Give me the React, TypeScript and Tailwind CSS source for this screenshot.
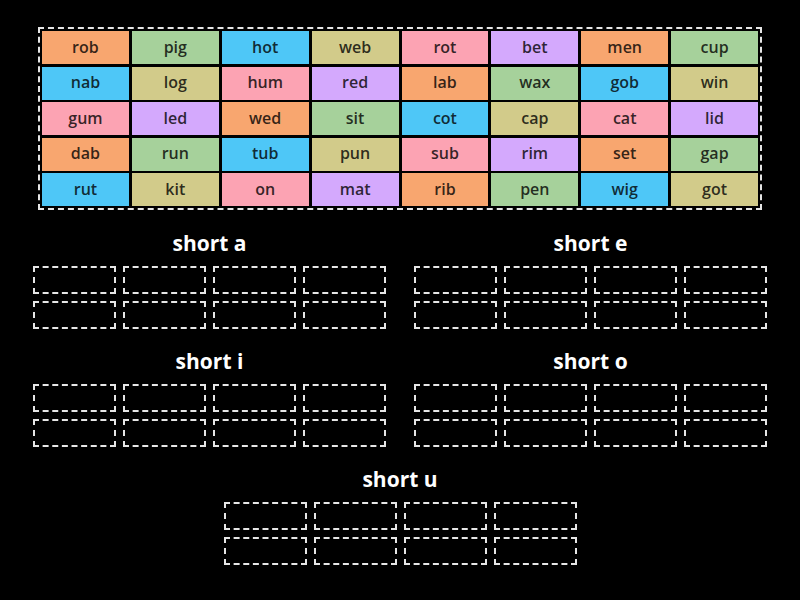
const words = [
  "rob", "pig", "hot", "web", "rot", "bet", "men", "cup",
  "nab", "log", "hum", "red", "lab", "wax", "gob", "win",
  "gum", "led", "wed", "sit", "cot", "cap", "cat", "lid",
  "dab", "run", "tub", "pun", "sub", "rim", "set", "gap",
  "rut", "kit", "on", "mat", "rib", "pen", "wig", "got",
];

// colours repeat in this order across the whole word bank
const tileColors = [
  "bg-[#f8a66f]",
  "bg-[#a6d19b]",
  "bg-[#4ec7f7]",
  "bg-[#d2cb8a]",
  "bg-[#fca3b3]",
  "bg-[#d4a9fd]",
];

function DropGroup({ title }: { title: string }) {
  return (
    <div className="w-[353px] flex flex-col">
      <h2 className="h-[24px] leading-[24px] text-center text-[21px] font-bold text-white mb-[11px]">
        {title}
      </h2>
      <div className="grid grid-cols-4 gap-[7px]">
        {Array.from({ length: 8 }).map((_, i) => (
          <div key={i} className="h-[28px] border-2 border-dashed border-[#e6e6e6]" />
        ))}
      </div>
    </div>
  );
}

export default function App() {
  return (
    <div
      className="w-[800px] h-[600px] bg-black overflow-hidden pt-[27px]"
      style={{ fontFamily: '"Open Sans", "Noto Sans", sans-serif' }}
    >
      <div className="w-[724px] mx-auto border-2 border-dashed border-[#e6e6e6] p-[2px]">
        <div className="grid grid-cols-8 gap-x-[3px] gap-y-[2.5px]">
          {words.map((w, i) => (
            <div
              key={w}
              className={`${tileColors[i % 6]} h-[33px] pb-[2px] flex items-center justify-center text-[16px] font-semibold text-black/80`}
            >
              {w}
            </div>
          ))}
        </div>
      </div>

      <div className="mt-[21px] flex flex-col items-center gap-[20px]">
        <div className="flex gap-[28px]">
          <DropGroup title="short a" />
          <DropGroup title="short e" />
        </div>
        <div className="flex gap-[28px]">
          <DropGroup title="short i" />
          <DropGroup title="short o" />
        </div>
        <DropGroup title="short u" />
      </div>
    </div>
  );
}
